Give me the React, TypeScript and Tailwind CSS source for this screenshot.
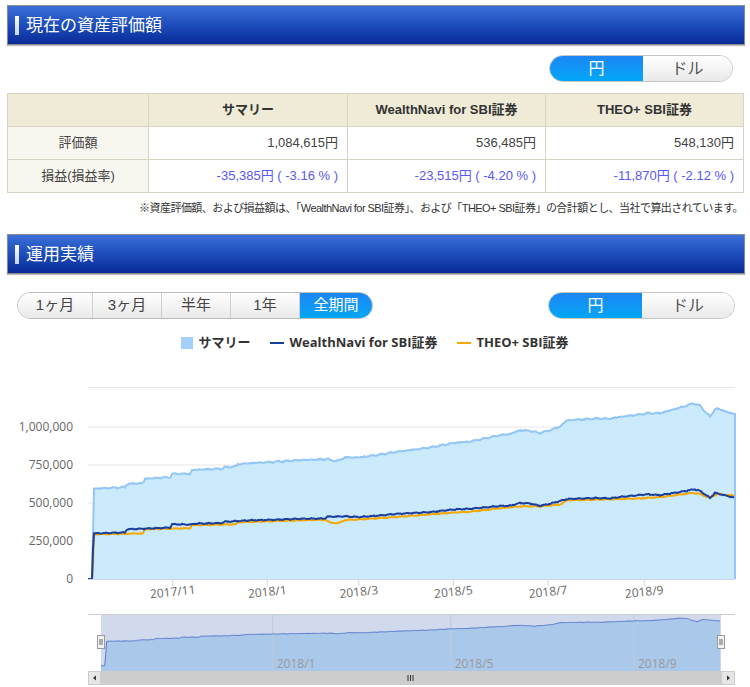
import React from 'react';

type P = [number, number];

// key points: [x on the plot, value in thousand yen]
const WN: P[] = [
  [88, 0], [92, 0], [93.5, 300], [125, 306], [127, 327], [170, 338], [172, 360], [192, 358],
  [194, 364], [222, 368], [224, 376], [250, 386], [275, 390], [300, 396], [325, 398], [327, 410],
  [345, 412], [360, 408], [380, 418], [395, 428], [430, 440], [455, 458], [470, 462], [500, 480],
  [510, 482], [520, 500], [530, 497], [540, 482], [550, 495], [567, 526], [597, 533], [610, 530],
  [620, 540], [647, 557], [660, 552], [680, 572], [694, 590], [700, 580], [710, 533], [715, 566],
  [734, 536],
];

const TH: P[] = [
  [88, 0], [92.5, 0], [94, 294], [143, 300], [145, 328], [190, 334], [192, 354], [236, 360],
  [238, 374], [300, 386], [325, 390], [330, 372], [338, 366], [345, 388], [360, 392], [390, 405],
  [420, 420], [455, 438], [470, 442], [500, 466], [520, 478], [540, 478], [560, 490], [567, 518],
  [617, 526], [640, 530], [660, 539], [693, 566], [700, 560], [710, 533], [717, 559], [734, 548],
];

function interp(keys: P[], x: number) {
  if (x <= keys[0][0]) return keys[0][1];
  for (let i = 1; i < keys.length; i++) {
    const [x1, v1] = keys[i];
    if (x <= x1) {
      const [x0, v0] = keys[i - 1];
      return v0 + ((v1 - v0) * (x - x0)) / (x1 - x0);
    }
  }
  return keys[keys.length - 1][1];
}

const xs: number[] = [];
for (let x = 88; x <= 734; x += 1) xs.push(x);

const wn = xs.map((x) => {
  const v = interp(WN, x);
  return x < 95 ? v : v + 2.2 * Math.sin(x * 0.73) + 1.4 * Math.sin(x * 1.9 + 1) + 0.8 * Math.sin(x * 3.7);
});
const th = xs.map((x) => {
  const v = interp(TH, x);
  return x < 95 ? v : v + 1.8 * Math.sin(x * 0.61 + 2) + 1.2 * Math.sin(x * 2.3) + 0.7 * Math.sin(x * 4.3 + 1);
});
const sum = xs.map((_, i) => wn[i] + th[i]);

const my = (v: number) => 578 - v * 0.152;
const nx = (x: number) => 101 + (x - 88) * 0.9583;
const ny = (v: number) => 664.7 - v * 0.0412;

const line = (vals: number[], fx: (x: number) => number, fy: (v: number) => number) =>
  vals.map((v, i) => `${i ? 'L' : 'M'}${fx(xs[i]).toFixed(1)},${fy(v).toFixed(1)}`).join('');

const sumLine = line(sum, (x) => x, my);
const lastY = my(sum[sum.length - 1]).toFixed(1);
const sumArea = `${sumLine}L735,${lastY}L735,578L88,578Z`;
const navLine = line(sum, nx, ny);
const navArea = `${navLine}L${nx(734).toFixed(1)},670L101,670Z`;

const yLabels: P[] = [[0, 0], [250, 0], [500, 0], [750, 0], [1000, 0]];
const yText = ['0', '250,000', '500,000', '750,000', '1,000,000'];
const xLabels: [number, string][] = [
  [172.7, '2017/11'], [267.3, '2018/1'], [358.8, '2018/3'],
  [453.4, '2018/5'], [548, '2018/7'], [644.2, '2018/9'],
];
const navLabels: [number, string][] = [[272.7, '2018/1'], [450.7, '2018/5'], [634, '2018/9']];

function Heading({ title }: { title: string }) {
  return (
    <div className="ml-[7px] flex h-[40px] w-[738px] items-center border border-[#8c8c8c] bg-gradient-to-b from-[#3b6fd6] via-[#1d4dbc] to-[#0a2a97] shadow-[0_1px_1px_rgba(0,0,0,0.25)]">
      <span className="ml-[7px] h-[19px] w-[4px] bg-gradient-to-b from-white to-[#c7d6f5]" />
      <span className="ml-[7px] text-[17px] leading-none text-white">{title}</span>
    </div>
  );
}

function YenDollar({ width }: { width: number }) {
  return (
    <div
      className="flex h-[27px] overflow-hidden rounded-full border border-[#c6c6c6] text-[16px]"
      style={{ width }}
    >
      <div className="flex w-[93px] items-center justify-center bg-gradient-to-b from-[#1c86f4] to-[#00a6f6] text-white">
        円
      </div>
      <div className="flex flex-1 items-center justify-center bg-gradient-to-b from-white to-[#e9e9e9] text-[#555]">
        ドル
      </div>
    </div>
  );
}

const tabs: [string, number][] = [['1ヶ月', 74], ['3ヶ月', 69], ['半年', 69], ['1年', 69], ['全期間', 73]];

const rows = [
  { label: '評価額', vals: ['1,084,615円', '536,485円', '548,130円'], blue: false },
  {
    label: '損益(損益率)',
    vals: ['-35,385円 ( -3.16 % )', '-23,515円 ( -4.20 % )', '-11,870円 ( -2.12 % )'],
    blue: true,
  },
];

export default function App() {
  return (
    <div className="relative h-[687px] w-[750px] overflow-hidden bg-white pt-[5px] font-['Liberation_Sans','Noto_Sans_CJK_JP',sans-serif] text-[#333]">
      <Heading title="現在の資産評価額" />

      <div className="mt-[10px] flex justify-end pr-[17px]">
        <YenDollar width={184} />
      </div>

      <table className="ml-[7px] mt-[11px] w-[736px] table-fixed border-collapse text-[13px]">
        <colgroup>
          <col className="w-[141px]" />
          <col className="w-[199px]" />
          <col className="w-[198px]" />
          <col className="w-[198px]" />
        </colgroup>
        <thead>
          <tr className="h-[33px] bg-[#efebd6]">
            <th className="border border-[#d8d4c3]" />
            <th className="border border-[#d8d4c3] font-bold">サマリー</th>
            <th className="border border-[#d8d4c3] font-bold">WealthNavi for SBI証券</th>
            <th className="border border-[#d8d4c3] font-bold">THEO+ SBI証券</th>
          </tr>
        </thead>
        <tbody>
          {rows.map((r) => (
            <tr key={r.label} className="h-[33px]">
              <td className="border border-[#d8d4c3] bg-[#f8f7ef] text-center text-[#444]">{r.label}</td>
              {r.vals.map((v) => (
                <td
                  key={v}
                  className={`border border-[#d8d4c3] pr-[9px] text-right ${r.blue ? 'text-[#5858f4]' : 'text-[#444]'}`}
                >
                  {v}
                </td>
              ))}
            </tr>
          ))}
        </tbody>
      </table>

      <div className="flex h-[30px] items-center justify-end pr-[7px] text-[11px] tracking-[-0.55px] text-[#333]">
        ※資産評価額、および損益額は、「WealthNavi for SBI証券」、および「THEO+ SBI証券」の合計額とし、当社で算出されています。
      </div>

      <div className="mt-[11px]">
        <Heading title="運用実績" />
      </div>

      <div className="mt-[18px] flex items-center justify-between pl-[17px] pr-[15px]">
        <div className="flex h-[27px] overflow-hidden rounded-full border border-[#bdbdbd] text-[15px] text-[#444]">
          {tabs.map(([t, w], i) => {
            const active = i === tabs.length - 1;
            return (
              <div
                key={t}
                style={{ width: w }}
                className={`flex items-center justify-center ${i ? 'border-l border-[#cfcfcf]' : ''} ${
                  active
                    ? 'bg-gradient-to-b from-[#1c86f4] to-[#00a6f6] text-white'
                    : 'bg-gradient-to-b from-white to-[#e9e9e9]'
                }`}
              >
                {t}
              </div>
            );
          })}
        </div>
        <YenDollar width={187} />
      </div>

      <div className="mt-[16px] flex h-[16px] items-center justify-center gap-[20px] font-['Open_Sans','Noto_Sans_CJK_JP',sans-serif] text-[13px] font-bold text-[#333]">
        <div className="flex items-center gap-[5px]">
          <span className="h-[12px] w-[12px] bg-[#a3d0fb]" />
          <span>サマリー</span>
        </div>
        <div className="flex items-center gap-[5px]">
          <span className="h-[2px] w-[14px] bg-[#1b3f9f]" />
          <span>WealthNavi for SBI証券</span>
        </div>
        <div className="flex items-center gap-[5px]">
          <span className="h-[2px] w-[14px] bg-[#f6a700]" />
          <span>THEO+ SBI証券</span>
        </div>
      </div>

      <svg
        width="750"
        height="332"
        viewBox="0 355 750 332"
        className="mt-[5px] block"
        fontFamily="'Open Sans', 'Noto Sans', sans-serif"
      >
        {/* grid */}
        {[250, 500, 750, 1000].map((v) => (
          <line key={v} x1="88" x2="735" y1={my(v)} y2={my(v)} stroke="#e6e6e6" />
        ))}
        <line x1="88" x2="735" y1="386.5" y2="386.5" stroke="#e6e6e6" />
        {yLabels.map(([v], i) => (
          <text key={v} x="73" y={my(v) + 4} textAnchor="end" fontSize="12" fill="#666">
            {yText[i]}
          </text>
        ))}

        {/* series */}
        <path d={sumArea} fill="#cbebfd" />
        <path d={`${sumLine}L735,${lastY}L735,578`} fill="none" stroke="#93c6f6" strokeWidth="2" />
        <path d={line(th, (x) => x, my)} fill="none" stroke="#f6a700" strokeWidth="2" />
        <path d={line(wn, (x) => x, my)} fill="none" stroke="#1b3f9f" strokeWidth="2" />

        {/* x axis */}
        <line x1="88" x2="735" y1="578.5" y2="578.5" stroke="#ccd6eb" />
        {xLabels.map(([x, t]) => (
          <g key={t}>
            <line x1={x} x2={x} y1="579" y2="585" stroke="#ccd6eb" />
            <text
              x={x}
              y="595"
              textAnchor="middle"
              fontSize="12"
              fill="#666"
              transform={`rotate(-6 ${x} 591)`}
            >
              {t}
            </text>
          </g>
        ))}

        {/* navigator */}
        <line x1="88" x2="735" y1="613.5" y2="613.5" stroke="#cfcfcf" />
        <path d={navArea} fill="#c8e6fb" />
        <rect x="101" y="614" width="620" height="56" fill="rgba(102,133,194,0.3)" />
        {navLabels.map(([x, t]) => (
          <g key={t}>
            <line x1={x} x2={x} y1="614" y2="670" stroke="#bfc8dd" />
            <text x={x + 4} y="667" fontSize="12" fill="#9a9a9a">
              {t}
            </text>
          </g>
        ))}
        <path d={navLine} fill="none" stroke="#5578cc" strokeWidth="1" />
        {[97.5, 717.5].map((x) => (
          <g key={x}>
            <rect x={x} y="634.5" width="7" height="13" fill="#f2f2f2" stroke="#999" />
            <line x1={x + 2.5} x2={x + 2.5} y1="638" y2="644" stroke="#666" />
            <line x1={x + 4.5} x2={x + 4.5} y1="638" y2="644" stroke="#666" />
          </g>
        ))}

        {/* scrollbar */}
        <rect x="88" y="670" width="647" height="14" fill="#f2f2f2" />
        <rect x="101" y="670" width="620" height="14" fill="#cdcdcd" />
        <rect x="88.5" y="670.5" width="12" height="13" fill="#e6e6e6" stroke="#cccccc" />
        <rect x="721.5" y="670.5" width="13" height="13" fill="#e6e6e6" stroke="#cccccc" />
        <path d="M96,674.5 L93,677 L96,679.5 Z" fill="#333" />
        <path d="M727,674.5 L730,677 L727,679.5 Z" fill="#333" />
        {[408, 410.5, 413].map((x) => (
          <line key={x} x1={x} x2={x} y1="674" y2="680" stroke="#333" />
        ))}
      </svg>
    </div>
  );
}
